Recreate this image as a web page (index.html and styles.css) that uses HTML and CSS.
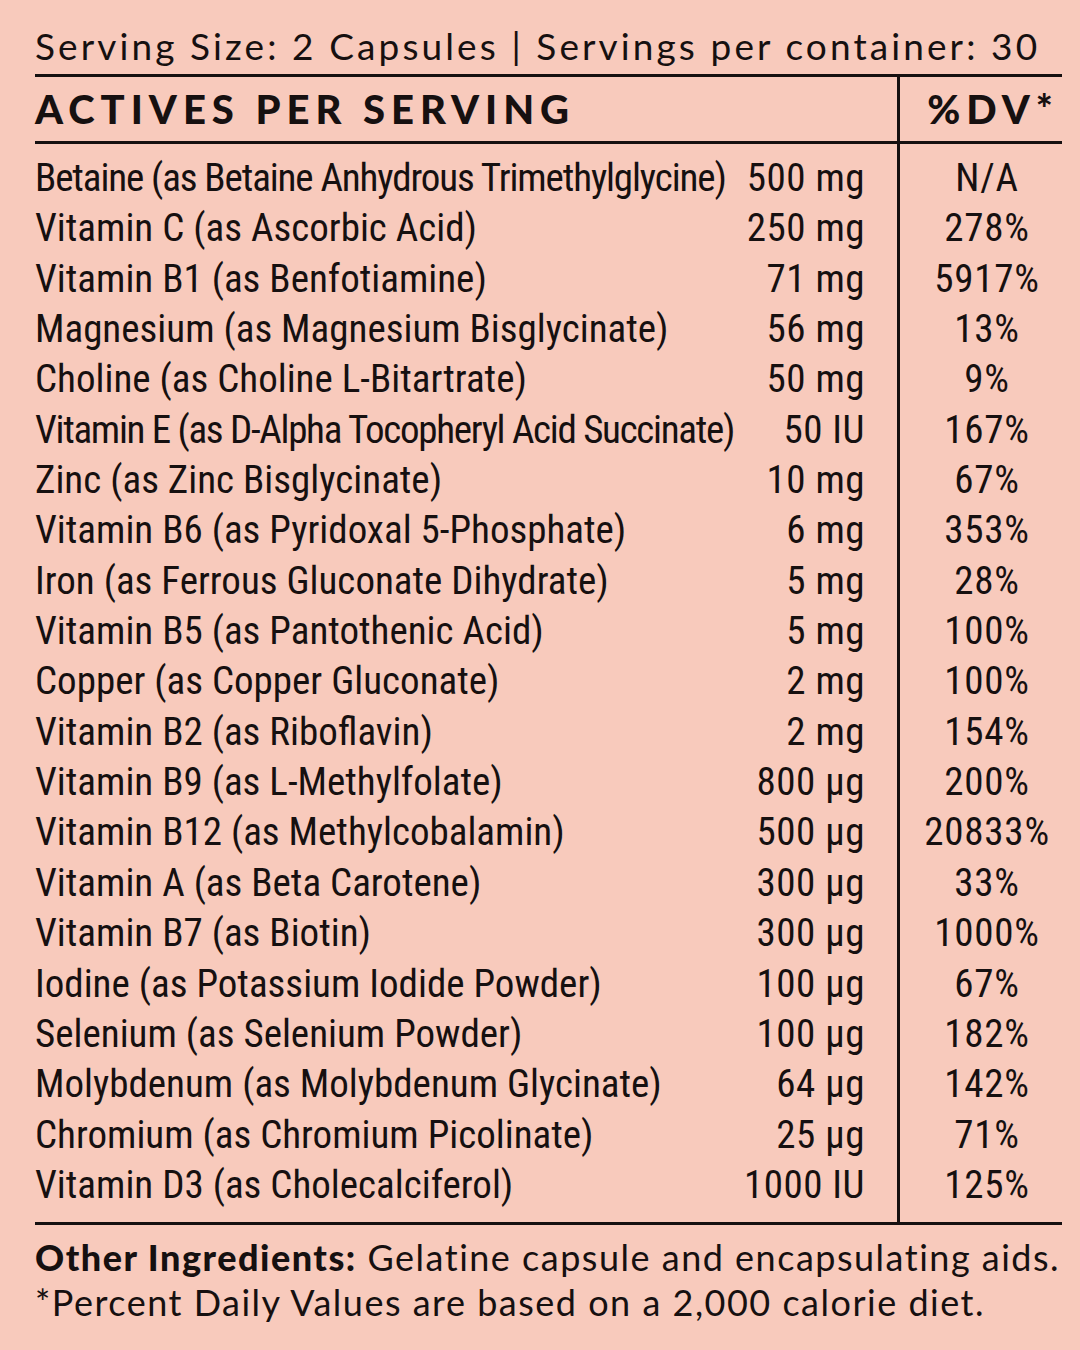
FILE: index.html
```html
<!DOCTYPE html>
<html lang="en">
<head>
<meta charset="utf-8">
<title>Supplement Facts</title>
<link rel="stylesheet" href="styles.css">
</head>
<body>
<main class="label">
  <p class="serving">Serving Size: 2 Capsules | Servings per container: 30</p>
  <section class="facts">
    <div class="head head-left">ACTIVES PER SERVING</div>
    <div class="head head-right">%DV*</div>
    <div class="col-left">
      <div class="row"><span class="name tight">Betaine (as Betaine Anhydrous Trimethylglycine)</span><span class="amt">500 mg</span></div>
      <div class="row"><span class="name">Vitamin C (as Ascorbic Acid)</span><span class="amt">250 mg</span></div>
      <div class="row"><span class="name">Vitamin B1 (as Benfotiamine)</span><span class="amt">71 mg</span></div>
      <div class="row"><span class="name">Magnesium (as Magnesium Bisglycinate)</span><span class="amt">56 mg</span></div>
      <div class="row"><span class="name">Choline (as Choline L-Bitartrate)</span><span class="amt">50 mg</span></div>
      <div class="row"><span class="name tighter">Vitamin E (as D-Alpha Tocopheryl Acid Succinate)</span><span class="amt">50 IU</span></div>
      <div class="row"><span class="name">Zinc (as Zinc Bisglycinate)</span><span class="amt">10 mg</span></div>
      <div class="row"><span class="name">Vitamin B6 (as Pyridoxal 5-Phosphate)</span><span class="amt">6 mg</span></div>
      <div class="row"><span class="name">Iron (as Ferrous Gluconate Dihydrate)</span><span class="amt">5 mg</span></div>
      <div class="row"><span class="name">Vitamin B5 (as Pantothenic Acid)</span><span class="amt">5 mg</span></div>
      <div class="row"><span class="name">Copper (as Copper Gluconate)</span><span class="amt">2 mg</span></div>
      <div class="row"><span class="name">Vitamin B2 (as Riboflavin)</span><span class="amt">2 mg</span></div>
      <div class="row"><span class="name">Vitamin B9 (as L-Methylfolate)</span><span class="amt">800 µg</span></div>
      <div class="row"><span class="name">Vitamin B12 (as Methylcobalamin)</span><span class="amt">500 µg</span></div>
      <div class="row"><span class="name">Vitamin A (as Beta Carotene)</span><span class="amt">300 µg</span></div>
      <div class="row"><span class="name">Vitamin B7 (as Biotin)</span><span class="amt">300 µg</span></div>
      <div class="row"><span class="name">Iodine (as Potassium Iodide Powder)</span><span class="amt">100 µg</span></div>
      <div class="row"><span class="name">Selenium (as Selenium Powder)</span><span class="amt">100 µg</span></div>
      <div class="row"><span class="name">Molybdenum (as Molybdenum Glycinate)</span><span class="amt">64 µg</span></div>
      <div class="row"><span class="name">Chromium (as Chromium Picolinate)</span><span class="amt">25 µg</span></div>
      <div class="row"><span class="name">Vitamin D3 (as Cholecalciferol)</span><span class="amt">1000 IU</span></div>
    </div>
    <div class="col-right">
      <div class="row dv">N/A</div>
      <div class="row dv">278%</div>
      <div class="row dv">5917%</div>
      <div class="row dv">13%</div>
      <div class="row dv">9%</div>
      <div class="row dv">167%</div>
      <div class="row dv">67%</div>
      <div class="row dv">353%</div>
      <div class="row dv">28%</div>
      <div class="row dv">100%</div>
      <div class="row dv">100%</div>
      <div class="row dv">154%</div>
      <div class="row dv">200%</div>
      <div class="row dv">20833%</div>
      <div class="row dv">33%</div>
      <div class="row dv">1000%</div>
      <div class="row dv">67%</div>
      <div class="row dv">182%</div>
      <div class="row dv">142%</div>
      <div class="row dv">71%</div>
      <div class="row dv">125%</div>
    </div>
  </section>
  <p class="note first"><strong>Other Ingredients:</strong> Gelatine capsule and encapsulating aids.</p>
  <p class="note">*Percent Daily Values are based on a 2,000 calorie diet.</p>
</main>
</body>
</html>
```
FILE: styles.css
```css
html, body {
  margin: 0;
  padding: 0;
  background: #f8cabc;
}
body {
  width: 1080px;
  height: 1350px;
  color: #161010;
  font-family: Lato, "Liberation Sans", sans-serif;
}
.label {
  padding: 18px 0 0 35px;
  width: 1027px;
}
.serving {
  margin: 0;
  font-size: 37px;
  letter-spacing: 3.1px;
  line-height: 56px;
  white-space: nowrap;
}
.facts {
  display: grid;
  grid-template-columns: 865px 162px;
  border-top: 3px solid #161010;
  border-bottom: 3px solid #161010;
  width: 1027px;
}
.head {
  height: 64px;
  border-bottom: 3px solid #161010;
  display: flex;
  align-items: center;
  font-weight: 900;
  font-size: 40px;
  letter-spacing: 6px;
}
.head-left {
  border-right: 3px solid #161010;
}
.head-right {
  justify-content: center;
  padding-left: 24px;
}
.col-left {
  border-right: 3px solid #161010;
  padding: 9px 32px 12px 0;
}
.col-right {
  padding: 9px 0 12px 12px;
}
.row {
  height: 50.35px;
  line-height: 50.35px;
  display: flex;
  justify-content: space-between;
  font-family: "Roboto Condensed", "Open Sans", sans-serif;
  font-stretch: 75%;
  font-weight: 400;
  font-size: 39px;
  letter-spacing: 0;
  white-space: nowrap;
}
.name.tight {
  letter-spacing: -1.1px;
}
.name.tighter {
  letter-spacing: -1.3px;
}
.amt {
  letter-spacing: 0.5px;
}
.dv {
  justify-content: center;
  letter-spacing: 0.8px;
}
.note {
  margin: 0;
  font-size: 36px;
  letter-spacing: 1.5px;
  line-height: 45px;
  white-space: nowrap;
}
.note.first {
  margin-top: 10px;
}
.note strong {
  font-weight: 900;
}
```
